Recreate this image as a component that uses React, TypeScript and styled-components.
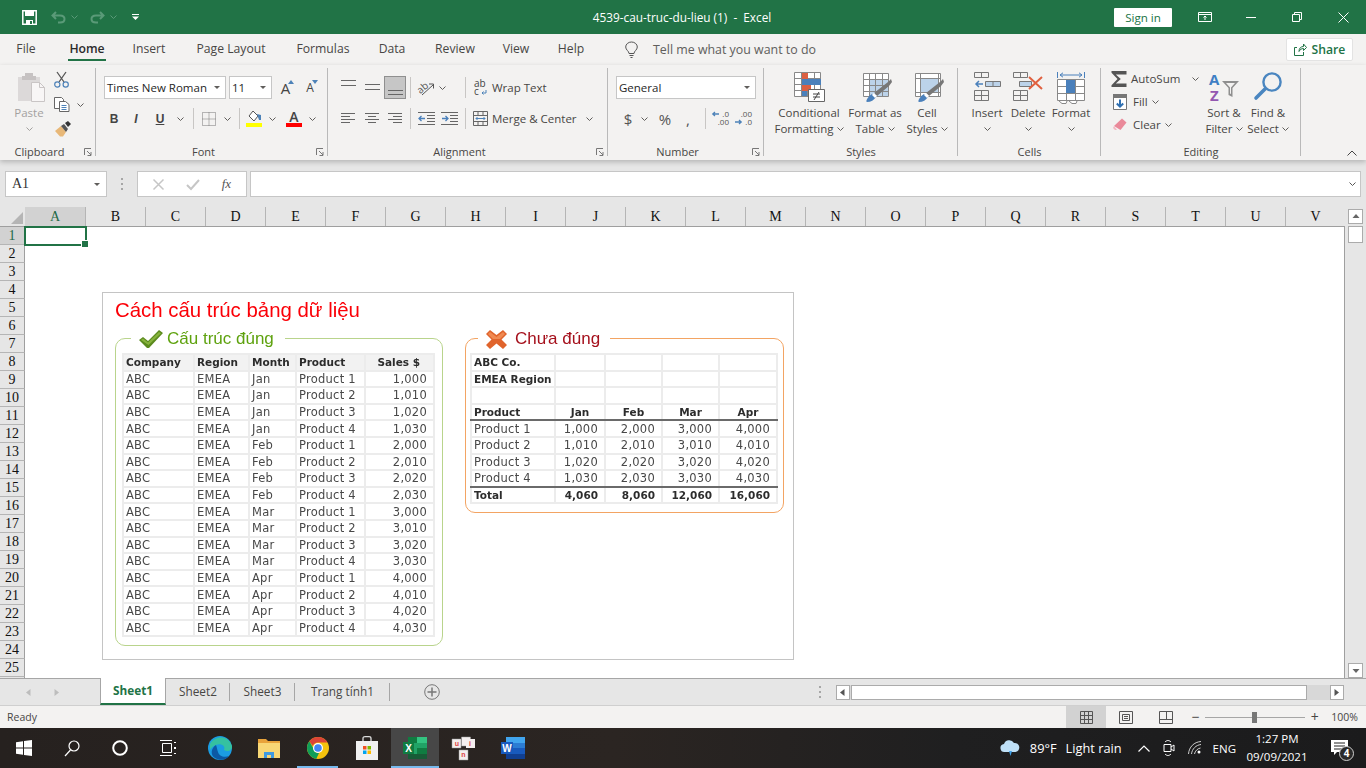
import React from "react";
import styled, { createGlobalStyle } from "styled-components";

const UI = `"Open Sans", "Noto Sans", Arial, sans-serif`;

const Global = createGlobalStyle`
  html, body { margin: 0; padding: 0; background: #e6e6e6; }
  body { font-family: ${UI}; overflow: hidden; }
  * { box-sizing: border-box; }
  svg { display: block; flex: none; overflow: visible; }
`;

const Page = styled.div`
  width: 1366px;
  height: 768px;
  display: flex;
  flex-direction: column;
  overflow: hidden;
`;

/* title bar */
const TitleBar = styled.header`
  height: 34px;
  flex: none;
  background: #217346;
  color: #fff;
  display: grid;
  grid-template-columns: 1fr 220px 1fr;
  align-items: center;
`;
const Quick = styled.div`
  display: flex;
  align-items: center;
  padding-left: 22px;
`;
const QuickSlot = styled.div<{ $w: number }>`
  width: ${(p) => p.$w}px;
  display: flex;
  align-items: center;
`;
const DocTitle = styled.div`
  font-size: 11.8px;
  text-align: center;
  white-space: pre;
  padding-right: 2px;
`;
const WinControls = styled.div`
  display: flex;
  justify-content: flex-end;
  align-items: center;
`;
const SignIn = styled.div`
  width: 58px;
  height: 19px;
  background: #fff;
  color: #217346;
  font-size: 11.6px;
  line-height: 19px;
  text-align: center;
  margin-right: 10px;
  border-radius: 1px;
`;
const WinBtn = styled.div`
  width: 46px;
  height: 34px;
  display: flex;
  align-items: center;
  justify-content: center;
`;

/* tabs */
const TabBar = styled.nav`
  height: 31px;
  flex: none;
  background: #f3f2f1;
  display: flex;
  align-items: center;
`;
const Tab = styled.div<{ $w: number; $on?: boolean }>`
  width: ${(p) => p.$w}px;
  height: 31px;
  line-height: 30px;
  text-align: center;
  font-size: 12.2px;
  color: ${(p) => (p.$on ? "#2b2b2b" : "#484644")};
  font-weight: ${(p) => (p.$on ? 600 : 400)};
  position: relative;
  &::after {
    content: "";
    display: ${(p) => (p.$on ? "block" : "none")};
    position: absolute;
    left: 16px;
    right: 16px;
    bottom: 4px;
    height: 2px;
    background: #217346;
  }
`;
const TellMe = styled.div`
  display: flex;
  align-items: center;
  gap: 15px;
  margin-left: 29px;
  font-size: 12.4px;
  color: #605e5c;
`;
const Share = styled.div`
  margin-left: auto;
  margin-right: 13px;
  width: 67px;
  height: 23px;
  background: #fff;
  border: 1px solid #e3e3e3;
  border-radius: 2px;
  color: #217346;
  font-size: 12.2px;
  font-weight: 600;
  display: flex;
  align-items: center;
  justify-content: center;
  gap: 5px;
`;

/* ribbon */
const Ribbon = styled.section`
  height: 95px;
  flex: none;
  display: flex;
  background: #f3f2f1;
  box-shadow: 0 2px 5px rgba(0, 0, 0, 0.22);
  position: relative;
  z-index: 2;
`;
const Group = styled.div<{ $w: number }>`
  width: ${(p) => p.$w}px;
  height: 95px;
  flex: none;
  display: flex;
  flex-direction: column;
  position: relative;
  &::after {
    content: "";
    position: absolute;
    right: 0;
    top: 3px;
    bottom: 4px;
    width: 1px;
    background: #b9b9b9;
  }
`;
const GroupBody = styled.div<{ $top?: number; $left?: number }>`
  flex: 1;
  padding-top: ${(p) => p.$top ?? 11}px;
  padding-left: ${(p) => p.$left ?? 0}px;
  display: flex;
  min-height: 0;
`;
const GroupLabel = styled.div<{ $launcher?: boolean }>`
  height: 16px;
  line-height: 15px;
  font-size: 11px;
  text-align: center;
  color: #484644;
  padding-right: ${(p) => (p.$launcher ? 17 : 0)}px;
`;
const Launcher = styled.div`
  position: absolute;
  right: 4px;
  bottom: 4px;
`;
const Stack = styled.div<{ $gap?: number; $w?: number; $top?: number }>`
  display: flex;
  flex-direction: column;
  gap: ${(p) => p.$gap ?? 8}px;
  padding-top: ${(p) => p.$top ?? 0}px;
  ${(p) => (p.$w ? `width: ${p.$w}px;` : "")}
`;
const ToolRow = styled.div<{ $left?: number }>`
  display: flex;
  align-items: center;
  height: 23px;
  padding-left: ${(p) => p.$left ?? 0}px;
`;
const Slot = styled.div<{ $w: number; $pressed?: boolean }>`
  width: ${(p) => p.$w}px;
  height: 23px;
  flex: none;
  display: flex;
  align-items: center;
  justify-content: center;
  ${(p) => (p.$pressed ? "background: #c6c6c6; border: 1px solid #8f8f8f;" : "")}
`;
const Divider = styled.div<{ $mx: number }>`
  width: 1px;
  height: 21px;
  flex: none;
  background: #c8c6c4;
  margin: 0 ${(p) => p.$mx}px;
`;
const Combo = styled.div<{ $w: number }>`
  width: ${(p) => p.$w}px;
  height: 23px;
  flex: none;
  background: #fff;
  border: 1px solid #c6c6c6;
  display: flex;
  align-items: center;
  justify-content: space-between;
  padding: 0 5px 0 2px;
  font-size: 11.5px;
  color: #1f1f1f;
`;
const Caret = styled.span`
  width: 0;
  height: 0;
  border-left: 3px solid transparent;
  border-right: 3px solid transparent;
  border-top: 3px solid #605e5c;
`;
const Mark = styled.span<{ $i?: boolean; $u?: boolean }>`
  font: ${(p) => (p.$i ? "italic " : "")}bold 12px "Liberation Sans", sans-serif;
  color: #444;
  ${(p) => (p.$u ? "text-decoration: underline;" : "")}
`;
const BigA = styled.span<{ $size: number }>`
  font: ${(p) => p.$size}px "Open Sans", sans-serif;
  color: #444;
`;
const Raise = styled.span`
  align-self: flex-start;
  margin: 4px 0 0 -2px;
`;
const NumMark = styled.span<{ $size: number }>`
  font: ${(p) => p.$size}px "Open Sans", sans-serif;
  color: #555;
`;
const ToolText = styled.span`
  font-size: 11.5px;
  color: #484644;
  white-space: nowrap;
`;
const LargeBtn = styled.div<{ $w: number }>`
  width: ${(p) => p.$w}px;
  flex: none;
  display: flex;
  flex-direction: column;
  align-items: center;
  font-size: 11.5px;
  line-height: 16px;
  color: #484644;
  white-space: nowrap;
  text-align: center;
`;
const LargeIcon = styled.div`
  height: 33px;
  display: flex;
  align-items: flex-start;
`;
const LargeLine = styled.div<{ $dim?: boolean }>`
  height: 16px;
  display: flex;
  align-items: center;
  gap: 3px;
  color: ${(p) => (p.$dim ? "#a3a19f" : "#484644")};
`;
const ClipTools = styled.div`
  display: flex;
  flex-direction: column;
  margin-left: 4px;
  gap: 8.5px;
`;
const ClipTool = styled.div`
  height: 16px;
  display: flex;
  align-items: center;
  gap: 7px;
`;
const EditRow = styled.div`
  height: 23px;
  display: flex;
  align-items: center;
  gap: 4px;
`;
const EditIcon = styled.div`
  width: 18px;
  display: flex;
  justify-content: center;
`;
const Collapse = styled.div`
  position: absolute;
  right: 9px;
  bottom: 4px;
`;

/* formula bar */
const FormulaBar = styled.div`
  height: 47px;
  flex: none;
  display: flex;
  align-items: flex-start;
  padding: 11px 5px 0;
  background: #e6e6e6;
`;
const FieldBox = styled.div<{ $w?: number }>`
  height: 26px;
  background: #fff;
  border: 1px solid #c6c6c6;
  display: flex;
  align-items: center;
  ${(p) => (p.$w ? `width: ${p.$w}px; flex: none;` : "flex: 1;")}
`;
const NameValue = styled.span`
  font: 14px "Liberation Serif", serif;
  color: #333;
  flex: 1;
  padding-left: 6px;
`;
const Dots = styled.div`
  width: 30px;
  height: 26px;
  display: flex;
  align-items: center;
  justify-content: center;
`;
const FxButtons = styled.div`
  display: flex;
  align-items: center;
  width: 100%;
  justify-content: space-around;
  padding: 0 4px;
`;
const FxMark = styled.span`
  font: italic 13px "Liberation Serif", serif;
  color: #555;
`;

/* sheet */
const SheetRow = styled.div`
  height: 471px;
  flex: none;
  display: flex;
  background: #e6e6e6;
`;
const SheetMain = styled.div`
  width: 1345px;
  flex: none;
  display: flex;
  flex-direction: column;
  overflow: hidden;
`;
const ColHeads = styled.div`
  height: 20px;
  flex: none;
  display: flex;
  border-bottom: 1px solid #9f9f9f;
`;
const Corner = styled.div`
  width: 25px;
  flex: none;
  display: flex;
  align-items: flex-end;
  justify-content: flex-end;
  padding: 0 2px 2px 0;
`;
const ColHead = styled.div<{ $on?: boolean }>`
  width: ${(p) => (p.$on ? 61 : 60)}px;
  flex: none;
  text-align: center;
  font: 14px/20px "Liberation Serif", serif;
  color: ${(p) => (p.$on ? "#1f6a47" : "#111")};
  background: ${(p) => (p.$on ? "#d2d2d2" : "transparent")};
  border-right: 1px solid #b5b5b5;
`;
const SheetBody = styled.div`
  flex: 1;
  display: flex;
  min-height: 0;
`;
const RowHeads = styled.div`
  width: 25px;
  flex: none;
  overflow: hidden;
`;
const RowHead = styled.div<{ $on?: boolean }>`
  height: 18px;
  text-align: center;
  font: 14px/18px "Liberation Serif", serif;
  color: ${(p) => (p.$on ? "#1f6a47" : "#111")};
  background: ${(p) => (p.$on ? "#d2d2d2" : "transparent")};
  border-bottom: 1px solid #b5b5b5;
  border-right: 1px solid #9f9f9f;
`;
const Canvas = styled.div`
  flex: 1;
  background: #fff;
  position: relative;
  border-right: 1px solid #9f9f9f;
`;
const Selected = styled.div`
  position: absolute;
  left: -1px;
  top: -1px;
  width: 63px;
  height: 20px;
  border: 2px solid #217346;
  &::after {
    content: "";
    position: absolute;
    right: -3px;
    bottom: -3px;
    width: 6px;
    height: 6px;
    background: #217346;
    border: 1px solid #fff;
    border-width: 1px 0 0 1px;
  }
`;
const VScroll = styled.div`
  flex: 1;
  display: flex;
  flex-direction: column;
  align-items: center;
  padding-top: 2px;
  gap: 2px;
`;
const ScrollBtn = styled.div<{ $end?: boolean }>`
  width: 15px;
  height: 15px;
  flex: none;
  background: #fff;
  border: 1px solid #ababab;
  display: flex;
  align-items: center;
  justify-content: center;
  ${(p) => (p.$end ? "margin-top: auto;" : "")}
`;
const VThumb = styled.div`
  width: 15px;
  height: 17px;
  background: #fff;
  border: 1px solid #ababab;
`;

/* floating picture */
const Picture = styled.figure`
  position: absolute;
  left: 77px;
  top: 65px;
  width: 692px;
  height: 368px;
  margin: 0;
  background: #fff;
  border: 1px solid #c4c4c4;
  padding: 0 0 0 12px;
  filter: blur(0.3px);
`;
const PicTitle = styled.figcaption`
  height: 34px;
  font: 20.4px/34px "Liberation Sans", Arial, sans-serif;
  color: #fb0007;
`;
const PicColumns = styled.div`
  display: flex;
  align-items: flex-start;
  gap: 22px;
`;
const Panel = styled.fieldset<{ $w: number; $c: string; $pad: string }>`
  width: ${(p) => p.$w}px;
  margin: 0;
  padding: ${(p) => p.$pad};
  border: 1.5px solid ${(p) => p.$c};
  border-radius: 10px;
  min-width: 0;
`;
const PanelLegend = styled.legend<{ $c: string; $ml: number; $w: number; $gap: number }>`
  margin-left: ${(p) => p.$ml}px;
  width: ${(p) => p.$w}px;
  height: 22px;
  padding: 2px 0 0 8px;
  display: flex;
  align-items: center;
  gap: ${(p) => p.$gap}px;
  font: 17px "Liberation Sans", Arial, sans-serif;
  color: ${(p) => p.$c};
`;
const Table = styled.table<{ $w: number }>`
  width: ${(p) => p.$w}px;
  margin-left: -1px;
  table-layout: fixed;
  border-collapse: collapse;
  font-family: "DejaVu Sans", Verdana, sans-serif;
  color: #444;
`;
const Col = styled.col<{ $w: number }>`
  width: ${(p) => p.$w}px;
`;
const Tr = styled.tr<{ $head?: boolean }>`
  height: 16.6px;
  ${(p) => (p.$head ? "background: #f2f2f2;" : "")}
`;
const Td = styled.td<{
  $b?: boolean;
  $align?: string;
  $pr?: number;
  $under?: boolean;
}>`
  padding: 0 ${(p) => p.$pr ?? 2}px 0 2px;
  border: 2px solid #ececec;
  ${(p) => (p.$under ? "border-bottom: 2px solid #6a6a6a;" : "")}
  font-weight: ${(p) => (p.$b ? 700 : 400)};
  font-size: ${(p) => (p.$b ? 10.5 : 11.5)}px;
  letter-spacing: ${(p) => (p.$b ? 0 : 0.25)}px;
  color: ${(p) => (p.$b ? "#2c2c2c" : "#484848")};
  text-align: ${(p) => p.$align ?? "left"};
  white-space: nowrap;
  overflow: hidden;
  line-height: 14px;
`;

/* sheet tabs */
const SheetTabs = styled.div`
  height: 28px;
  flex: none;
  display: flex;
  align-items: stretch;
  background: #e6e6e6;
  border-top: 1px solid #a6a6a6;
  border-bottom: 1px solid #cfcfcf;
`;
const TabNav = styled.div`
  width: 100px;
  flex: none;
  display: flex;
  align-items: center;
  gap: 20px;
  padding-left: 25px;
`;
const SheetTab = styled.div<{ $w: number; $on?: boolean; $sep?: boolean }>`
  width: ${(p) => p.$w}px;
  flex: none;
  text-align: center;
  font-size: 11.8px;
  line-height: 25px;
  position: relative;
  color: ${(p) => (p.$on ? "#217346" : "#484644")};
  font-weight: ${(p) => (p.$on ? 700 : 400)};
  background: ${(p) => (p.$on ? "#fff" : "transparent")};
  ${(p) =>
    p.$on
      ? "border-left: 1px solid #a6a6a6; border-right: 1px solid #a6a6a6; border-bottom: 2px solid #217346; margin-top: -1px;"
      : ""}
  &::after {
    content: "";
    display: ${(p) => (p.$sep ? "block" : "none")};
    position: absolute;
    right: 0;
    top: 4px;
    bottom: 4px;
    width: 1px;
    background: #a6a6a6;
  }
`;
const AddSheet = styled.div`
  margin-left: 34px;
  display: flex;
  align-items: center;
`;
const HScrollWrap = styled.div`
  margin-left: auto;
  margin-right: 22px;
  display: flex;
  align-items: center;
  width: 530px;
`;
const HDots = styled.div`
  width: 22px;
  padding-left: 5px;
`;
const HScroll = styled.div`
  flex: 1;
  height: 15px;
  display: flex;
  background: #d8d8d8;
`;
const HBtn = styled.div`
  width: 14px;
  height: 15px;
  flex: none;
  background: #fff;
  border: 1px solid #ababab;
  display: flex;
  align-items: center;
  justify-content: center;
`;
const HThumb = styled.div`
  width: 456px;
  margin-left: 1px;
  background: #fff;
  border: 1px solid #ababab;
`;
const HFill = styled.div`
  flex: 1;
`;

/* status bar */
const StatusBar = styled.footer`
  height: 22px;
  flex: none;
  background: #f3f2f1;
  display: flex;
  align-items: center;
  padding-left: 7px;
  font-size: 10.5px;
  color: #484644;
`;
const Views = styled.div`
  margin-left: auto;
  display: flex;
  align-items: center;
  height: 22px;
`;
const ViewBtn = styled.div<{ $on?: boolean }>`
  width: 40px;
  height: 22px;
  display: flex;
  align-items: center;
  justify-content: center;
  background: ${(p) => (p.$on ? "#d2d2d2" : "transparent")};
`;
const Zoomer = styled.div`
  display: flex;
  align-items: center;
  margin-left: 5px;
  margin-right: 8px;
`;
const ZoomTrack = styled.div`
  width: 100px;
  height: 1px;
  background: #a6a6a6;
  margin: 0 5px;
  position: relative;
`;
const ZoomThumb = styled.div`
  position: absolute;
  left: 47px;
  top: -5px;
  width: 5px;
  height: 11px;
  background: #777;
`;
const ZoomSign = styled.span`
  font-size: 14px;
  line-height: 14px;
  color: #484644;
  width: 9px;
  text-align: center;
`;
const ZoomPct = styled.span`
  margin-left: 12px;
  font-size: 10.5px;
`;

/* taskbar */
const Taskbar = styled.div`
  height: 40px;
  flex: none;
  display: flex;
  align-items: stretch;
  color: #fff;
  background: linear-gradient(90deg, #26211f 0%, #2b2522 45%, #1f1f20 70%, #1b1b1c 100%);
`;
const TaskItem = styled.div<{ $w: number; $ml?: number; $active?: boolean; $open?: boolean }>`
  width: ${(p) => p.$w}px;
  margin-left: ${(p) => p.$ml ?? 0}px;
  flex: none;
  display: flex;
  align-items: center;
  justify-content: center;
  position: relative;
  background: ${(p) => (p.$active ? "#474747" : "transparent")};
  &::after {
    content: "";
    display: ${(p) => (p.$active || p.$open ? "block" : "none")};
    position: absolute;
    left: ${(p) => (p.$open ? 4 : 0)}px;
    right: ${(p) => (p.$open ? 4 : 0)}px;
    bottom: 0;
    height: 2px;
    background: #76b9ed;
  }
`;
const Tray = styled.div`
  margin-left: auto;
  display: flex;
  align-items: center;
  font-size: 13px;
`;
const TrayText = styled.span<{ $ml: number; $size?: number }>`
  margin-left: ${(p) => p.$ml}px;
  font-size: ${(p) => p.$size ?? 12.8}px;
  white-space: nowrap;
`;
const TrayIcon = styled.div<{ $ml: number }>`
  margin-left: ${(p) => p.$ml}px;
`;
const Clock = styled.div`
  width: 66px;
  margin-left: 8px;
  text-align: center;
  font-size: 11.5px;
  line-height: 18px;
`;
const Notify = styled.div`
  margin-left: 14px;
  width: 42px;
  position: relative;
  height: 40px;
  display: flex;
  align-items: center;
  padding-left: 7px;
`;
const Badge = styled.span`
  position: absolute;
  left: 15px;
  top: 18px;
  width: 15px;
  height: 15px;
  border-radius: 50%;
  border: 1px solid #cfcfcf;
  background: #2a2a2a;
  font-size: 10px;
  font-weight: 700;
  line-height: 13px;
  text-align: center;
`;

/* small drawings */
const Chev = ({ c = "#605e5c" }: { c?: string }) => (
  <svg width="7" height="4" viewBox="0 0 7 4">
    <path d="M.5.5l3 3 3-3" fill="none" stroke={c} />
  </svg>
);
const LaunchIcon = () => (
  <svg width="8" height="8" viewBox="0 0 8 8" fill="none" stroke="#777">
    <path d="M.5 7V.5H7M3 3l4 4M7 4v3.500H3.500" />
  </svg>
);
const Save = () => (
  <svg width="15" height="15" viewBox="0 0 15 15">
    <path d="M.8.8h13.400v13.400H.8z" fill="none" stroke="#fff" strokeWidth="1.500" />
    <path d="M3 1h9v5H3zM4 10h7v4H4z" fill="#fff" />
    <path d="M8 11h2v3H8z" fill="#217346" />
  </svg>
);
const UndoArrow = ({ flip }: { flip?: boolean }) => (
  <svg width="15" height="13" viewBox="0 0 15 13" fill="none" stroke="#5a9a78" strokeWidth="2" transform={flip ? "scale(-1 1)" : undefined}>
    <path d="M5 1L1.500 4.500 5 8M2 4.500h7c6 0 6 7 0 7H7" />
  </svg>
);
const Customize = () => (
  <svg width="7" height="6" viewBox="0 0 7 6">
    <path d="M0 0h7v1H0zM0 2.500h7L3.500 6z" fill="#fff" />
  </svg>
);
const AlignLines = ({ lines }: { lines: [number, number, number][] }) => (
  <svg width="15" height="15" viewBox="0 0 15 15" stroke="#666">
    {lines.map(([a, b, y], i) => (
      <path key={i} d={`M${a} ${y + 0.5}H${b}`} />
    ))}
  </svg>
);
const PasteIcon = () => (
  <svg width="33" height="31" viewBox="-4 0 33 31">
    <path d="M1 5h22v24H1z" fill="#dcd9d9" />
    <path d="M8 1h8v3h3v4H5V4h3z" fill="#c6c2c2" />
    <path d="M14.500 10.500h8l5 5v14h-13z" fill="#f8f6f6" stroke="#c9c5c5" />
    <path d="M22.500 10.500v5h5" fill="none" stroke="#c9c5c5" />
  </svg>
);
const CutIcon = () => (
  <svg width="15" height="16" viewBox="0 0 15 16" fill="none">
    <path d="M3 0l7 10M12 0L5 10" stroke="#555" strokeWidth="1.300" />
    <circle cx="3.300" cy="12.500" r="2.600" stroke="#4d82b8" strokeWidth="1.200" />
    <circle cx="11.700" cy="12.500" r="2.600" stroke="#4d82b8" strokeWidth="1.200" />
  </svg>
);
const CopyIcon = () => (
  <svg width="16" height="15" viewBox="0 0 16 15" fill="#fff" stroke="#666">
    <path d="M.5.5h7l2 2v9h-9z" />
    <path d="M5.500 4.500h6l3.500 3v7h-9.500z" />
    <path d="M7.500 8.500h5M7.500 10.500h5M7.500 12.500h5" stroke="#4d82b8" />
  </svg>
);
const PainterIcon = () => (
  <svg width="18" height="16" viewBox="0 0 18 16">
    <path d="M1 10l6-5 5 6-3 4.500H6z" fill="#e8b878" />
    <path d="M7 5l3-2 4 5-2 3z" fill="#555" />
    <path d="M11 2l3-2 3 3-3 3z" fill="#333" />
  </svg>
);
const BorderIcon = () => (
  <svg width="14" height="14" viewBox="0 0 14 14" fill="none" stroke="#777" strokeDasharray="1 1">
    <path d="M.5.5h13v13H.5zM7 .5v13M.5 7h13" />
  </svg>
);
const FillIcon = () => (
  <svg width="16" height="17" viewBox="0 0 16 17">
    <path d="M7 1l5 5-4 5-5-5z" fill="#fff" stroke="#555" />
    <path d="M11 4l4 1 0 5-2 0z" fill="#4d82b8" />
    <path d="M0 13h16v4H0z" fill="#ffff00" />
  </svg>
);
const ColorA = () => (
  <svg width="16" height="17" viewBox="0 0 16 17">
    <text x="8" y="12" textAnchor="middle" fontFamily="Open Sans" fontWeight="600" fontSize="14" fill="#444">A</text>
    <path d="M0 13h16v4H0z" fill="#f00" />
  </svg>
);
const TinyTriangle = ({ down }: { down?: boolean }) => (
  <svg width="6" height="4" viewBox="0 0 6 4">
    <path d={down ? "M0 0h6L3 4z" : "M3 0l3 4H0z"} fill="#4d82b8" />
  </svg>
);
const Orientation = () => (
  <svg width="18" height="16" viewBox="0 0 18 16">
    <text x="0" y="11" transform="rotate(-40 6 8)" fontFamily="Open Sans" fontSize="10" fill="#555">ab</text>
    <path d="M5 15L16 5M12 4h4.500v4.500" fill="none" stroke="#555" />
  </svg>
);
const WrapIcon = () => (
  <svg width="14" height="17" viewBox="0 0 14 17">
    <text x="0" y="8" fontFamily="Open Sans" fontSize="10" fill="#444">ab</text>
    <text x="0" y="16" fontFamily="Open Sans" fontSize="10" fill="#444">c</text>
    <path d="M12 11v3H8M9.500 12.500L8 14l1.500 1.500" fill="none" stroke="#4d82b8" />
  </svg>
);
const MergeIcon = () => (
  <svg width="15" height="15" viewBox="0 0 15 15" fill="none" stroke="#666">
    <path d="M.5.5h14v14H.5zM.5 4.500h14M.5 10.500h14M5 .5v4M10 .5v4M5 10.500v4M10 10.500v4" />
    <path d="M3 7.500h9M4.500 6L3 7.500 4.500 9M10.500 6L12 7.500 10.500 9" stroke="#4d82b8" />
  </svg>
);
const DecimalIcon = ({ more }: { more?: boolean }) => (
  <svg width="17" height="15" viewBox="0 0 17 15">
    <text x="17" y="6" textAnchor="end" fontFamily="Open Sans" fontSize="8" fill="#555">{more ? ".00" : ".0"}</text>
    <text x="17" y="14" textAnchor="end" fontFamily="Open Sans" fontSize="8" fill="#555">{more ? ".0" : ".00"}</text>
    {more ? (
      <path d="M0 11h6M4 9l2.200 2L4 13" fill="none" stroke="#4d82b8" strokeWidth="1.300" />
    ) : (
      <path d="M7 3H1M3 1L.8 3 3 5" fill="none" stroke="#4d82b8" strokeWidth="1.300" />
    )}
  </svg>
);
const gridLines = "M.5.5h26v24H.5zM.5 6.500h26M.5 12.500h26M.5 18.500h26M7.500.5v24M13.500.5v24M20.500.5v24";
const CondIcon = () => (
  <svg width="31" height="30" viewBox="0 0 31 30">
    <path d={gridLines} fill="#fff" stroke="#888" />
    <path d="M8 1h6v6H8zM8 13h9v6H8z" fill="#dc6042" />
    <path d="M8 7h19v6H8zM8 19h5v5H8z" fill="#4a80bb" />
    <path d="M14.500 17.500h16v12h-16z" fill="#fff" stroke="#666" />
    <path d="M19 22h7M19 25h7M25 20l-5 8" fill="none" stroke="#444" />
  </svg>
);
const Brush = () => (
  <>
    <path d="M5 30c-2 0 1-6 5-8l4 3c-2 3-5 5-9 5z" fill="#4a80bb" />
    <path d="M12 21L26 10l3-3 1 3-3 4-12 10z" fill="#777" />
    <path d="M12 21l3 3-2 2-3-3z" fill="#fff" />
  </>
);
const TableIcon = () => (
  <svg width="35" height="31" viewBox="-4 0 35 31">
    <path d="M2 1h25v23H2z" fill="#fff" />
    <path d="M8 7h19v17H8z" fill="#bcd3ea" />
    <path d="M1.500 1.500h25v23h-25zM1.500 7.500h25M1.500 13.500h25M1.500 19.500h25M7.500 1.500v23M13.500 1.500v23M20.500 1.500v23" fill="none" stroke="#888" />
    <Brush />
  </svg>
);
const CellIcon = () => (
  <svg width="35" height="31" viewBox="-4 0 35 31">
    <path d="M1.500 1.500h25v23h-25z" fill="#fff" stroke="#888" />
    <path d="M6 7h19v13H6z" fill="#bcd3ea" />
    <path d="M1.500 6.500h25M1.500 20.500h25M6.500 1.500v23M24.500 1.500v23" fill="none" stroke="#888" />
    <Brush />
  </svg>
);
const InsertIcon = () => (
  <svg width="27" height="29" viewBox="0 0 27 29" fill="none">
    <path d="M.5.5h14v5H.5zM7.500.5v5M.5 18.500h14v10H.5zM.5 23.500h14M7.500 18.500v10" stroke="#777" />
    <path d="M11.500 9.500h15v5h-15zM19 9.500v5" fill="#bcd3ea" stroke="#777" />
    <path d="M9 12H2M5 9l-3 3 3 3" stroke="#4a80bb" strokeWidth="1.500" />
  </svg>
);
const DeleteIcon = () => (
  <svg width="30" height="29" viewBox="0 0 30 29" fill="none">
    <path d="M.5.5h14v5H.5zM7.500.5v5M.5 18.500h14v10H.5zM.5 23.500h14M7.500 18.500v10" stroke="#777" />
    <path d="M6.500 9.500h12v5h-12z" fill="#bcd3ea" stroke="#777" />
    <path d="M16 5l13 12M29 5L16 17" stroke="#e0603f" strokeWidth="2" />
  </svg>
);
const FormatIcon = () => (
  <svg width="28" height="32" viewBox="0 0 28 32" fill="none">
    <path d="M.5 7.500h27v21H.5zM.5 14.500h27M.5 21.500h27M9.500 7.500v21M18.500 7.500v21" fill="#fff" stroke="#888" />
    <path d="M9 8h9v13H9z" fill="#4a80bb" />
    <path d="M3 3h22M6 .8L3 3l3 2.200M22 .8L25 3l-3 2.200M.5 0v6M27.500 0v6" stroke="#4a80bb" />
    <path d="M2 29l3 2.500h4l1-2.500M12 29l3 2.500h4l1-2.500" fill="#fff" stroke="#888" />
  </svg>
);
const SigmaIcon = () => (
  <svg width="16" height="16" viewBox="0 0 16 16">
    <path d="M.5 0h15v3.500H4.800l5 4.500-5 4.500h10.700V16H.5v-1.800L6.500 8 .5 1.800z" fill="#555" />
  </svg>
);
const FillDown = () => (
  <svg width="14" height="16" viewBox="0 0 14 16">
    <path d="M.5.5h13v15H.5z" fill="#fff" stroke="#777" />
    <path d="M0 0h14v4H0z" fill="#777" />
    <path d="M7 5.500v7M3.800 9.500L7 12.700l3.200-3.200" fill="none" stroke="#2f6fb0" strokeWidth="2" />
  </svg>
);
const EraserIcon = () => (
  <svg width="14" height="13" viewBox="0 0 14 13">
    <path d="M9 .5l4.500 4-6 7.500L1 8z" fill="#ea8a9a" />
    <path d="M1 8l3 4H2L0 10z" fill="#f4b8c2" />
  </svg>
);
const SortIcon = () => (
  <svg width="31" height="31" viewBox="0 0 31 31">
    <text x="0" y="13" fontFamily="Open Sans" fontWeight="700" fontSize="15" fill="#3f7fc4">A</text>
    <text x="1" y="29" fontFamily="Open Sans" fontWeight="700" fontSize="15" fill="#9357b0">Z</text>
    <path d="M13 9h17l-6.500 7v9l-4-2v-7z" fill="#8f8f8f" />
    <path d="M17 11h9l-4 4.500v6.500l-1-.5v-6z" fill="#f3f2f1" />
  </svg>
);
const FindIcon = () => (
  <svg width="29" height="29" viewBox="0 0 29 29" fill="none">
    <circle cx="18" cy="10" r="8.600" stroke="#4a86c0" strokeWidth="2.400" />
    <path d="M11 17L2 26" stroke="#4a86c0" strokeWidth="3.600" strokeLinecap="round" />
  </svg>
);
const ShareIcon = () => (
  <svg width="13" height="13" viewBox="0 0 13 13" fill="none" stroke="#217346">
    <path d="M3 4.500H.5v8h9V9M5 8.500C5 5 7 3.500 9.500 3.500V1l3 3.500-3 3V5.500c-2 0-3.500 1-4.500 3z" />
  </svg>
);
const Bulb = () => (
  <svg width="13" height="16" viewBox="0 0 13 16" fill="none" stroke="#555">
    <path d="M4 11.500C4 9 .7 8 .7 5a5.800 5 0 0 1 11.600 0c0 3-3.300 4-3.300 6.500zM4.500 13.500h4M5.500 15.500h2" />
  </svg>
);
const Arrow = ({ dir, c = "#666" }: { dir: "u" | "d" | "l" | "r"; c?: string }) => {
  const d = { u: "M4 1l3.500 4h-7z", d: "M4 6L.5 2h7z", l: "M1 3.500L5.500 0v7z", r: "M6 3.500L1.500 0v7z" }[dir];
  return (
    <svg width="8" height="7" viewBox="0 0 8 7">
      <path d={d} fill={c} />
    </svg>
  );
};
const VDots = () => (
  <svg width="3" height="12" viewBox="0 0 3 12" fill="#a6a6a6">
    <path d="M0 0h2v2H0zM0 5h2v2H0zM0 10h2v2H0z" />
  </svg>
);

/* taskbar drawings */
const WinLogo = () => (
  <svg width="16" height="16" viewBox="0 0 16 16" fill="#fff">
    <path d="M0 2.200L7 1.200V7.500H0zM8 1L16 0v7.500H8zM0 8.500h7v6.300L0 13.800zM8 8.500h8V16L8 15z" />
  </svg>
);
const SearchGlass = () => (
  <svg width="16" height="17" viewBox="0 0 16 17" fill="none" stroke="#fff" strokeWidth="1.200">
    <circle cx="10" cy="6" r="5" />
    <path d="M6.500 10L1 16" />
  </svg>
);
const Ring = () => (
  <svg width="16" height="16" viewBox="0 0 16 16" fill="none" stroke="#fff" strokeWidth="2">
    <circle cx="8" cy="8" r="6.800" />
  </svg>
);
const TaskView = () => (
  <svg width="16" height="16" viewBox="0 0 16 16" fill="none" stroke="#fff">
    <path d="M2.500 3.500h9v9h-9zM0 .5h12M0 15.500h12" />
    <path d="M14 2h2v1h-2zM14 7h2v2h-2zM14 13h2v1h-2z" fill="#fff" stroke="none" />
  </svg>
);
const EdgeLogo = () => (
  <svg width="24" height="24" viewBox="0 0 24 24">
    <circle cx="12" cy="12" r="12" fill="#1b9de2" />
    <path d="M2 8C6 0 20-2 24 10c.5 5-5 6-8 4 2-4-3-7-8-5-3 1-5 3-6 5z" fill="#35c1a0" />
    <path d="M8 9c-5 3-6 10-1 13 5 3 11 2 14-2-5 2-10 0-11-4-1-2-1-5-2-7z" fill="#0c59a4" />
  </svg>
);
const Folder = () => (
  <svg width="22" height="19" viewBox="0 0 22 19">
    <path d="M0 0h8l2 2h12v3H0z" fill="#e8a33b" />
    <path d="M0 4h22v15H0z" fill="#f8d775" />
    <path d="M6 13h10v6H6z" fill="#3f9ae0" />
    <path d="M9 16h4v3H9z" fill="#f8d775" />
  </svg>
);
const ChromeLogo = () => (
  <svg width="22" height="22" viewBox="0 0 22 22">
    <circle cx="11" cy="11" r="11" fill="#f4c20d" />
    <path d="M11 0a11 11 0 0 1 9.500 5.500H11A5.500 5.500 0 0 0 5.800 9L2.300 4.300A11 11 0 0 1 11 0z" fill="#db4437" />
    <path d="M2.300 4.300L7 12.500A5 5 0 0 0 12 16l-2.800 5.900A11 11 0 0 1 2.300 4.300z" fill="#0f9d58" />
    <circle cx="11" cy="11" r="5" fill="#fff" />
    <circle cx="11" cy="11" r="3.800" fill="#4285f4" />
  </svg>
);
const StoreBag = () => (
  <svg width="22" height="24" viewBox="0 0 22 24">
    <path d="M7 5V2.500C7 1 8 .7 9 .7h4c1 0 2 .3 2 1.800V5" fill="none" stroke="#ddd" strokeWidth="1.300" />
    <path d="M0 5h22v19H0z" fill="#f1f1f1" />
    <path d="M7 10h3.500v3.500H7z" fill="#f25022" />
    <path d="M11.500 10H15v3.500h-3.500z" fill="#7fba00" />
    <path d="M7 14.500h3.500V18H7z" fill="#00a4ef" />
    <path d="M11.500 14.500H15V18h-3.500z" fill="#ffb900" />
  </svg>
);
const ExcelLogo = () => (
  <svg width="24" height="22" viewBox="0 0 24 22">
    <path d="M5 0h19v22H5z" fill="#21a366" />
    <path d="M14 0h10v6H14z" fill="#33c481" />
    <path d="M14 11h10v6H14zM5 0h9v6H5z" fill="#107c41" />
    <path d="M5 17h19v5H5z" fill="#185c37" />
    <path d="M0 5h11v12H0z" fill="#107c41" />
    <text x="5.500" y="14.500" textAnchor="middle" fontFamily="Liberation Sans" fontWeight="700" fontSize="10" fill="#fff">X</text>
  </svg>
);
const Unikey = () => (
  <svg width="23" height="23" viewBox="0 0 23 23">
    <path d="M0 2h9v9H0zM9.500 0h9v9h-9zM7 13h9v10H7z" fill="#f4efef" stroke="#999" strokeWidth=".5" />
    <path d="M14 2h9v9h-9z" fill="#f4efef" />
    <text x="5" y="8.500" textAnchor="middle" fontFamily="Liberation Sans" fontWeight="700" fontSize="7" fill="#d44">u</text>
    <text x="18" y="8.500" textAnchor="middle" fontFamily="Liberation Sans" fontWeight="700" fontSize="7" fill="#d44">i</text>
    <text x="11.500" y="20" textAnchor="middle" fontFamily="Liberation Sans" fontWeight="700" fontSize="7" fill="#d44">n</text>
  </svg>
);
const WordLogo = () => (
  <svg width="24" height="22" viewBox="0 0 24 22">
    <path d="M5 0h19v6H5z" fill="#41a5ee" />
    <path d="M5 6h19v5H5z" fill="#2b7cd3" />
    <path d="M5 11h19v6H5z" fill="#185abd" />
    <path d="M5 17h19v5H5z" fill="#103f91" />
    <path d="M0 5h12v12H0z" fill="#185abd" />
    <text x="6" y="14.500" textAnchor="middle" fontFamily="Liberation Sans" fontWeight="700" fontSize="10" fill="#fff">W</text>
  </svg>
);
const Cloud = () => (
  <svg width="20" height="18" viewBox="0 0 20 18">
    <path d="M5 13a4 4 0 0 1-1-8 5.500 5.500 0 0 1 10-1 4.500 4.500 0 0 1 1.500 9z" fill="#bfe0f7" />
    <path d="M9 12h3l-1.500 5z" fill="#3fa0e8" />
  </svg>
);
const Meet = () => (
  <svg width="12" height="18" viewBox="0 0 12 18" fill="none" stroke="#fff">
    <path d="M1 5.500h7v7H1zM8 8l3-2v6l-3-2M2 3c2-2 4-2 6 0M2 15c2 2 4 2 6 0" />
  </svg>
);
const Wifi = () => (
  <svg width="14" height="14" viewBox="0 0 14 14" fill="none" stroke="#cfcfcf">
    <path d="M.5 13C1 6 6 1 13 .5M3.500 13C4 8 8 4 13 3.500M6.500 13c.5-3 3-5.500 6-6" />
    <circle cx="11" cy="11" r="1.500" fill="#fff" stroke="none" />
  </svg>
);
const NotifyIcon = () => (
  <svg width="17" height="16" viewBox="0 0 17 16">
    <path d="M0 0h17v12H6l-3 3v-3H0z" fill="#fff" />
    <path d="M3 3h11M3 6h11M3 9h8" stroke="#222" />
  </svg>
);
const TrayCaret = () => (
  <svg width="12" height="7" viewBox="0 0 12 7" fill="none" stroke="#fff" strokeWidth="1.200">
    <path d="M.5 6.500L6 1l5.500 5.500" />
  </svg>
);
const GridView = () => (
  <svg width="13" height="13" viewBox="0 0 13 13" fill="none" stroke="#555">
    <path d="M.5.5h12v12H.5zM4.500.5v12M8.500.5v12M.5 4.500h12M.5 8.500h12" />
  </svg>
);
const PageView = () => (
  <svg width="14" height="13" viewBox="0 0 14 13" fill="none" stroke="#555">
    <path d="M.5.5h13v12H.5zM3.500 3.500h7v6h-7zM5 5.500h4M5 7.500h4" />
  </svg>
);
const BreakView = () => (
  <svg width="14" height="13" viewBox="0 0 14 13" fill="none" stroke="#555">
    <path d="M.5.5h13v12H.5zM.5 8.500h13M7.500.5v8" />
  </svg>
);
const CheckMark = () => (
  <svg width="24" height="18" viewBox="0 0 24 18">
    <path d="M0 10l4-3 5 4L20 0l4 3L10 18h-2z" fill="#5b8a1e" />
    <path d="M2 10l2-1.500 5 4L20 2l2 1.200L9.500 15z" fill="#86b33c" />
  </svg>
);
const CrossMark = () => (
  <svg width="21" height="19" viewBox="0 0 21 19">
    <path d="M4 0l6.500 5L17 0l4 4-5.500 5.500L21 15l-4 4-6.500-5.500L4 19l-4-4 5.500-5.500L0 4z" fill="#e0642c" />
    <path d="M4 2l6.500 5L17 2l2 2-5 5H7L2 4z" fill="#f08a52" />
  </svg>
);

/* data */
const columns = "ABCDEFGHIJKLMNOPQRSTUV".split("");
const rowNumbers = Array.from({ length: 26 }, (_, i) => i + 1);
const months = ["Jan", "Feb", "Mar", "Apr"];
const goodRows = months.flatMap((m, mi) =>
  [0, 1, 2, 3].map((p) => ({
    month: m,
    product: `Product ${p + 1}`,
    sales: ((mi + 1) * 1000 + p * 10).toLocaleString("en-US"),
  })),
);
const badRows = [0, 1, 2, 3].map((p) => ({
  name: `Product ${p + 1}`,
  values: [0, 1, 2, 3].map((m) => ((m + 1) * 1000 + p * 10).toLocaleString("en-US")),
}));

const GoodTable = () => (
  <Table $w={311}>
    <colgroup>
      <Col $w={71} />
      <Col $w={55} />
      <Col $w={47} />
      <Col $w={69} />
      <Col $w={69} />
    </colgroup>
    <tbody>
      <Tr $head>
        <Td $b>Company</Td>
        <Td $b>Region</Td>
        <Td $b>Month</Td>
        <Td $b>Product</Td>
        <Td $b $align="right" $pr={13}>Sales $</Td>
      </Tr>
      {goodRows.map((r, i) => (
        <Tr key={i}>
          <Td>ABC</Td>
          <Td>EMEA</Td>
          <Td>{r.month}</Td>
          <Td>{r.product}</Td>
          <Td $align="right" $pr={6}>{r.sales}</Td>
        </Tr>
      ))}
    </tbody>
  </Table>
);

const BadTable = () => (
  <Table $w={306}>
    <colgroup>
      <Col $w={84} />
      <Col $w={50} />
      <Col $w={57} />
      <Col $w={57} />
      <Col $w={58} />
    </colgroup>
    <tbody>
      <Tr>
        <Td $b>ABC Co.</Td>
        <Td /><Td /><Td /><Td />
      </Tr>
      <Tr>
        <Td $b>EMEA Region</Td>
        <Td /><Td /><Td /><Td />
      </Tr>
      <Tr>
        <Td>&nbsp;</Td>
        <Td /><Td /><Td /><Td />
      </Tr>
      <Tr>
        <Td $b $under>Product</Td>
        {months.map((m) => (
          <Td key={m} $b $under $align="center">{m}</Td>
        ))}
      </Tr>
      {badRows.map((r, i) => (
        <Tr key={r.name}>
          <Td $under={i === 3}>{r.name}</Td>
          {r.values.map((v) => (
            <Td key={v} $under={i === 3} $align="right" $pr={6}>{v}</Td>
          ))}
        </Tr>
      ))}
      <Tr>
        <Td $b>Total</Td>
        {["4,060", "8,060", "12,060", "16,060"].map((v) => (
          <Td key={v} $b $align="right" $pr={6}>{v}</Td>
        ))}
      </Tr>
    </tbody>
  </Table>
);

export default function App() {
  return (
    <Page>
      <Global />
      <TitleBar>
        <Quick>
          <QuickSlot $w={29}><Save /></QuickSlot>
          <QuickSlot $w={20}><UndoArrow /></QuickSlot>
          <QuickSlot $w={19}><Chev c="#5a9a78" /></QuickSlot>
          <QuickSlot $w={20}><UndoArrow flip /></QuickSlot>
          <QuickSlot $w={22}><Chev c="#5a9a78" /></QuickSlot>
          <QuickSlot $w={10}><Customize /></QuickSlot>
        </Quick>
        <DocTitle>4539-cau-truc-du-lieu (1)  -  Excel</DocTitle>
        <WinControls>
          <SignIn>Sign in</SignIn>
          <WinBtn>
            <svg width="14" height="10" viewBox="0 0 14 10" fill="none" stroke="#fff">
              <path d="M.5.5h13v9H.5zM.5 2.500h13M7 8V4M5.500 5.500L7 4l1.500 1.500" />
            </svg>
          </WinBtn>
          <WinBtn>
            <svg width="10" height="1" viewBox="0 0 10 1"><path d="M0 0h10v1H0z" fill="#fff" /></svg>
          </WinBtn>
          <WinBtn>
            <svg width="10" height="10" viewBox="0 0 10 10" fill="none" stroke="#fff">
              <path d="M.5 2.500h7v7h-7zM2.500 2.500v-2h7v7h-2" />
            </svg>
          </WinBtn>
          <WinBtn>
            <svg width="11" height="11" viewBox="0 0 11 11" fill="none" stroke="#fff">
              <path d="M.5.5l10 10M10.500.5l-10 10" />
            </svg>
          </WinBtn>
        </WinControls>
      </TitleBar>

      <TabBar>
        <Tab $w={52}>File</Tab>
        <Tab $w={70} $on>Home</Tab>
        <Tab $w={54}>Insert</Tab>
        <Tab $w={110}>Page Layout</Tab>
        <Tab $w={74}>Formulas</Tab>
        <Tab $w={64}>Data</Tab>
        <Tab $w={62}>Review</Tab>
        <Tab $w={60}>View</Tab>
        <Tab $w={50}>Help</Tab>
        <TellMe><Bulb />Tell me what you want to do</TellMe>
        <Share><ShareIcon />Share</Share>
      </TabBar>

      <Ribbon>
        <Group $w={96}>
          <GroupBody $top={7} $left={8}>
            <LargeBtn $w={42}>
              <LargeIcon><PasteIcon /></LargeIcon>
              <LargeLine $dim>Paste</LargeLine>
              <LargeLine><Chev c="#a3a19f" /></LargeLine>
            </LargeBtn>
            <ClipTools>
              <ClipTool><CutIcon /></ClipTool>
              <ClipTool><CopyIcon /><Chev /></ClipTool>
              <ClipTool><PainterIcon /></ClipTool>
            </ClipTools>
          </GroupBody>
          <GroupLabel $launcher>Clipboard</GroupLabel>
          <Launcher><LaunchIcon /></Launcher>
        </Group>

        <Group $w={232}>
          <GroupBody $left={8}>
            <Stack>
              <ToolRow>
                <Combo $w={122}>
                  <span>Times New Roman</span><Caret />
                </Combo>
                <Slot $w={3} />
                <Combo $w={43}>
                  <span>11</span><Caret />
                </Combo>
                <Slot $w={8} />
                <Slot $w={15}><BigA $size={15}>A</BigA><Raise><TinyTriangle /></Raise></Slot>
                <Slot $w={10} />
                <Slot $w={14}><BigA $size={12}>A</BigA><Raise><TinyTriangle down /></Raise></Slot>
              </ToolRow>
              <ToolRow>
                <Slot $w={20}><Mark>B</Mark></Slot>
                <Slot $w={24}><Mark $i>I</Mark></Slot>
                <Slot $w={24}><Mark $u>U</Mark></Slot>
                <Slot $w={16}><Chev /></Slot>
                <Divider $mx={5} />
                <Slot $w={20}><BorderIcon /></Slot>
                <Slot $w={16}><Chev /></Slot>
                <Divider $mx={4} />
                <Slot $w={20}><FillIcon /></Slot>
                <Slot $w={16}><Chev /></Slot>
                <Slot $w={4} />
                <Slot $w={20}><ColorA /></Slot>
                <Slot $w={16}><Chev /></Slot>
              </ToolRow>
            </Stack>
          </GroupBody>
          <GroupLabel $launcher>Font</GroupLabel>
          <Launcher><LaunchIcon /></Launcher>
        </Group>

        <Group $w={280}>
          <GroupBody $left={8}>
            <Stack>
              <ToolRow>
                <Slot $w={24}><AlignLines lines={[[0, 15, 0], [0, 15, 5]]} /></Slot>
                <Slot $w={24}><AlignLines lines={[[0, 15, 4], [0, 15, 9]]} /></Slot>
                <Slot $w={22} $pressed><AlignLines lines={[[0, 15, 10], [0, 15, 14]]} /></Slot>
                <Divider $mx={4} />
                <Slot $w={22}><Orientation /></Slot>
                <Slot $w={10}><Chev /></Slot>
                <Slot $w={18} />
                <Divider $mx={0} />
                <Slot $w={7} />
                <Slot $w={16}><WrapIcon /></Slot>
                <Slot $w={3} />
                <ToolText>Wrap Text</ToolText>
              </ToolRow>
              <ToolRow>
                <Slot $w={24}><AlignLines lines={[[0, 14, 2], [0, 9, 5], [0, 14, 8], [0, 9, 11]]} /></Slot>
                <Slot $w={24}><AlignLines lines={[[0, 14, 2], [3, 11, 5], [0, 14, 8], [3, 11, 11]]} /></Slot>
                <Slot $w={22}><AlignLines lines={[[0, 14, 2], [5, 14, 5], [0, 14, 8], [5, 14, 11]]} /></Slot>
                <Divider $mx={4} />
                <Slot $w={22}>
                  <svg width="17" height="13" viewBox="0 0 17 13" fill="none" stroke="#666">
                    <path d="M0 .5h17M9 3.500h8M9 6.500h8M9 9.500h8M0 12.500h17" />
                    <path d="M7 6.500H1M3.500 4L1 6.500 3.500 9" stroke="#4a80bb" strokeWidth="1.300" />
                  </svg>
                </Slot>
                <Slot $w={24}>
                  <svg width="17" height="13" viewBox="0 0 17 13" fill="none" stroke="#666">
                    <path d="M0 .5h17M9 3.500h8M9 6.500h8M9 9.500h8M0 12.500h17" />
                    <path d="M1 6.500h6M4.500 4L7 6.500 4.500 9" stroke="#4a80bb" strokeWidth="1.300" />
                  </svg>
                </Slot>
                <Slot $w={4} />
                <Divider $mx={0} />
                <Slot $w={6} />
                <Slot $w={16}><MergeIcon /></Slot>
                <Slot $w={4} />
                <ToolText>Merge &amp; Center</ToolText>
                <Slot $w={26}><Chev /></Slot>
              </ToolRow>
            </Stack>
          </GroupBody>
          <GroupLabel $launcher>Alignment</GroupLabel>
          <Launcher><LaunchIcon /></Launcher>
        </Group>

        <Group $w={156}>
          <GroupBody $left={8}>
            <Stack>
              <ToolRow>
                <Combo $w={140}>
                  <span>General</span><Caret />
                </Combo>
              </ToolRow>
              <ToolRow $left={4}>
                <Slot $w={16}><NumMark $size={15}>$</NumMark></Slot>
                <Slot $w={16}><Chev /></Slot>
                <Slot $w={26}><NumMark $size={15}>%</NumMark></Slot>
                <Slot $w={20}><NumMark $size={15}>,</NumMark></Slot>
                <Slot $w={5} />
                <Divider $mx={2} />
                <Slot $w={24}><DecimalIcon /></Slot>
                <Slot $w={22}><DecimalIcon more /></Slot>
              </ToolRow>
            </Stack>
          </GroupBody>
          <GroupLabel $launcher>Number</GroupLabel>
          <Launcher><LaunchIcon /></Launcher>
        </Group>

        <Group $w={194}>
          <GroupBody $top={7} $left={10}>
            <LargeBtn $w={70}>
              <LargeIcon><CondIcon /></LargeIcon>
              <LargeLine>Conditional</LargeLine>
              <LargeLine>Formatting <Chev /></LargeLine>
            </LargeBtn>
            <LargeBtn $w={62}>
              <LargeIcon><TableIcon /></LargeIcon>
              <LargeLine>Format as</LargeLine>
              <LargeLine>Table <Chev /></LargeLine>
            </LargeBtn>
            <LargeBtn $w={42}>
              <LargeIcon><CellIcon /></LargeIcon>
              <LargeLine>Cell</LargeLine>
              <LargeLine>Styles <Chev /></LargeLine>
            </LargeBtn>
          </GroupBody>
          <GroupLabel>Styles</GroupLabel>
        </Group>

        <Group $w={143}>
          <GroupBody $top={7} $left={9}>
            <LargeBtn $w={40}>
              <LargeIcon><InsertIcon /></LargeIcon>
              <LargeLine>Insert</LargeLine>
              <LargeLine><Chev /></LargeLine>
            </LargeBtn>
            <LargeBtn $w={42}>
              <LargeIcon><DeleteIcon /></LargeIcon>
              <LargeLine>Delete</LargeLine>
              <LargeLine><Chev /></LargeLine>
            </LargeBtn>
            <LargeBtn $w={44}>
              <LargeIcon><FormatIcon /></LargeIcon>
              <LargeLine>Format</LargeLine>
              <LargeLine><Chev /></LargeLine>
            </LargeBtn>
          </GroupBody>
          <GroupLabel>Cells</GroupLabel>
        </Group>

        <Group $w={200}>
          <GroupBody $top={2} $left={10}>
            <Stack $gap={0} $w={91}>
              <EditRow>
                <EditIcon><SigmaIcon /></EditIcon>
                <ToolText>AutoSum</ToolText>
                <Slot $w={22}><Chev /></Slot>
              </EditRow>
              <EditRow>
                <EditIcon><FillDown /></EditIcon>
                <ToolText>Fill</ToolText>
                <Chev />
              </EditRow>
              <EditRow>
                <EditIcon><EraserIcon /></EditIcon>
                <ToolText>Clear</ToolText>
                <Chev />
              </EditRow>
            </Stack>
            <Stack $gap={0} $top={5}>
              <LargeBtn $w={44}>
                <LargeIcon><SortIcon /></LargeIcon>
                <LargeLine>Sort &amp;</LargeLine>
                <LargeLine>Filter <Chev /></LargeLine>
              </LargeBtn>
            </Stack>
            <Stack $gap={0} $top={5}>
              <LargeBtn $w={44}>
                <LargeIcon><FindIcon /></LargeIcon>
                <LargeLine>Find &amp;</LargeLine>
                <LargeLine>Select <Chev /></LargeLine>
              </LargeBtn>
            </Stack>
          </GroupBody>
          <GroupLabel>Editing</GroupLabel>
        </Group>

        <Collapse>
          <svg width="10" height="6" viewBox="0 0 10 6" fill="none" stroke="#444">
            <path d="M.5 5.500L5 1l4.500 4.500" />
          </svg>
        </Collapse>
      </Ribbon>

      <FormulaBar>
        <FieldBox $w={102}>
          <NameValue>A1</NameValue>
          <Slot $w={18}><Caret /></Slot>
        </FieldBox>
        <Dots><VDots /></Dots>
        <FieldBox $w={110}>
          <FxButtons>
            <svg width="11" height="11" viewBox="0 0 11 11" fill="none" stroke="#c6c6c6" strokeWidth="1.500">
              <path d="M.5.5l10 10M10.500.5l-10 10" />
            </svg>
            <svg width="14" height="11" viewBox="0 0 14 11" fill="none" stroke="#c6c6c6" strokeWidth="2">
              <path d="M1 6l4 4 8-9" />
            </svg>
            <FxMark>fx</FxMark>
          </FxButtons>
        </FieldBox>
        <Slot $w={3} />
        <FieldBox>
          <Slot $w={1098} />
          <Chev c="#555" />
        </FieldBox>
      </FormulaBar>

      <SheetRow>
        <SheetMain>
          <ColHeads>
            <Corner>
              <svg width="12" height="12" viewBox="0 0 12 12"><path d="M12 0v12H0z" fill="#b5b5b5" /></svg>
            </Corner>
            {columns.map((c, i) => (
              <ColHead key={c} $on={i === 0}>{c}</ColHead>
            ))}
          </ColHeads>
          <SheetBody>
            <RowHeads>
              {rowNumbers.map((n) => (
                <RowHead key={n} $on={n === 1}>{n < 26 ? n : ""}</RowHead>
              ))}
            </RowHeads>
            <Canvas>
              <Picture>
                <PicTitle>Cách cấu trúc bảng dữ liệu</PicTitle>
                <PicColumns>
                  <Panel $w={328} $c="#b9d48c" $pad="4px 7px 8px 7px">
                    <PanelLegend $c="#5ea20e" $ml={8} $w={154} $gap={4}>
                      <CheckMark />Cấu trúc đúng
                    </PanelLegend>
                    <GoodTable />
                  </Panel>
                  <Panel $w={319} $c="#f3a463" $pad="4px 6px 8px 5px">
                    <PanelLegend $c="#a5101c" $ml={7} $w={132} $gap={8}>
                      <CrossMark />Chưa đúng
                    </PanelLegend>
                    <BadTable />
                  </Panel>
                </PicColumns>
              </Picture>
              <Selected />
            </Canvas>
          </SheetBody>
        </SheetMain>
        <VScroll>
          <ScrollBtn><Arrow dir="u" /></ScrollBtn>
          <VThumb />
          <ScrollBtn $end><Arrow dir="d" /></ScrollBtn>
        </VScroll>
      </SheetRow>

      <SheetTabs>
        <TabNav>
          <Arrow dir="l" c="#bdbdbd" />
          <Arrow dir="r" c="#bdbdbd" />
        </TabNav>
        <SheetTab $w={66} $on>Sheet1</SheetTab>
        <SheetTab $w={64} $sep>Sheet2</SheetTab>
        <SheetTab $w={65} $sep>Sheet3</SheetTab>
        <SheetTab $w={95} $sep>Trang tính1</SheetTab>
        <AddSheet>
          <svg width="16" height="16" viewBox="0 0 16 16" fill="none" stroke="#777">
            <circle cx="8" cy="8" r="7.300" />
            <path d="M8 3.500v9M3.500 8h9" strokeWidth="1.500" />
          </svg>
        </AddSheet>
        <HScrollWrap>
          <HDots><VDots /></HDots>
          <HScroll>
            <HBtn><Arrow dir="l" c="#555" /></HBtn>
            <HThumb />
            <HFill />
            <HBtn><Arrow dir="r" c="#555" /></HBtn>
          </HScroll>
        </HScrollWrap>
      </SheetTabs>

      <StatusBar>
        Ready
        <Views>
          <ViewBtn $on><GridView /></ViewBtn>
          <ViewBtn><PageView /></ViewBtn>
          <ViewBtn><BreakView /></ViewBtn>
        </Views>
        <Zoomer>
          <ZoomSign>−</ZoomSign>
          <ZoomTrack><ZoomThumb /></ZoomTrack>
          <ZoomSign>+</ZoomSign>
          <ZoomPct>100%</ZoomPct>
        </Zoomer>
      </StatusBar>

      <Taskbar>
        <TaskItem $w={48}><WinLogo /></TaskItem>
        <TaskItem $w={48}><SearchGlass /></TaskItem>
        <TaskItem $w={48}><Ring /></TaskItem>
        <TaskItem $w={48}><TaskView /></TaskItem>
        <TaskItem $w={49} $ml={3}><EdgeLogo /></TaskItem>
        <TaskItem $w={49}><Folder /></TaskItem>
        <TaskItem $w={49} $open><ChromeLogo /></TaskItem>
        <TaskItem $w={49}><StoreBag /></TaskItem>
        <TaskItem $w={48} $active><ExcelLogo /></TaskItem>
        <TaskItem $w={49}><Unikey /></TaskItem>
        <TaskItem $w={49}><WordLogo /></TaskItem>
        <Tray>
          <Cloud />
          <TrayText $ml={10}>89°F</TrayText>
          <TrayText $ml={9}>Light rain</TrayText>
          <TrayIcon $ml={16}><TrayCaret /></TrayIcon>
          <TrayIcon $ml={13}><Meet /></TrayIcon>
          <TrayIcon $ml={13}><Wifi /></TrayIcon>
          <TrayText $ml={11} $size={11.5}>ENG</TrayText>
          <Clock>1:27 PM<br />09/09/2021</Clock>
          <Notify><NotifyIcon /><Badge>4</Badge></Notify>
        </Tray>
      </Taskbar>
    </Page>
  );
}
